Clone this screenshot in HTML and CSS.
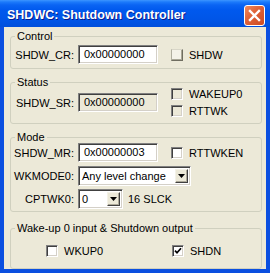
FILE: index.html
```html
<!DOCTYPE html>
<html lang="en">
<head>
  <meta charset="UTF-8">
  <title>SHDWC: Shutdown Controller</title>
  <link rel="stylesheet" href="styles.css">
</head>
<body>
  <div class="window">
    <div class="titlebar">
      <span class="title">SHDWC: Shutdown Controller</span>
      <span class="close">
        <svg width="19" height="19" viewBox="0 0 19 19"><path d="M5 5 L14 14 M14 5 L5 14" stroke="#fff" stroke-width="2.4" stroke-linecap="square"/></svg>
      </span>
    </div>

    <div class="client">
      <fieldset class="group g-control">
        <legend>Control</legend>
        <div class="row">
          <span class="lbl">SHDW_CR:</span>
          <span class="edit">0x00000000</span>
          <span class="check"><span class="box raised"></span>SHDW</span>
        </div>
      </fieldset>

      <fieldset class="group g-status">
        <legend>Status</legend>
        <div class="row tall">
          <span class="lbl">SHDW_SR:</span>
          <span class="edit readonly">0x00000000</span>
          <div class="checks">
            <span class="check"><span class="box grey"></span>WAKEUP0</span>
            <span class="check"><span class="box grey"></span>RTTWK</span>
          </div>
        </div>
      </fieldset>

      <fieldset class="group g-mode">
        <legend>Mode</legend>
        <div class="row">
          <span class="lbl">SHDW_MR:</span>
          <span class="edit">0x00000003</span>
          <span class="check"><span class="box"></span>RTTWKEN</span>
        </div>
        <div class="row combo-row">
          <span class="lbl">WKMODE0:</span>
          <span class="combo wide"><span class="val">Any level change</span><span class="drop"><svg width="7" height="4" viewBox="0 0 7 4"><path d="M0 0 H7 L3.5 4 Z" fill="#000"/></svg></span></span>
        </div>
        <div class="row combo-row second">
          <span class="lbl">CPTWK0:</span>
          <span class="combo narrow"><span class="val">0</span><span class="drop"><svg width="7" height="4" viewBox="0 0 7 4"><path d="M0 0 H7 L3.5 4 Z" fill="#000"/></svg></span></span>
          <span class="unit">16 SLCK</span>
        </div>
      </fieldset>

      <fieldset class="group g-wake">
        <legend>Wake-up 0 input &amp; Shutdown output</legend>
        <div class="row wake-row">
          <span class="check wkup"><span class="box"></span>WKUP0</span>
          <span class="check shdn"><span class="box"><svg width="8" height="8" viewBox="0 0 8 8"><path d="M1 3.6 L3 5.8 L7 1.2" stroke="#000" stroke-width="1.7" fill="none"/></svg></span>SHDN</span>
        </div>
      </fieldset>
    </div>
  </div>
</body>
</html>
```

FILE: styles.css
```css
body{
  margin: 0;
  font-family: "Liberation Sans", Arial, sans-serif;
  font-size: 11px;
  color: #000;
}
.window{
  width: 270px;
  height: 273px;
  background-color: #0b4fe0;
  display: flex;
  flex-direction: column;
}
.titlebar{
  height: 27px;
  display: flex;
  align-items: flex-start;
  padding: 0 5px 0 7px;
  background: linear-gradient(to bottom, #3d95ff 0, #1c7afb 2px, #0a64f3 5px, #0059ee 10px, #0055e7 20px, #004fdc 27px);
}
.title{
  color: white;
  font-weight: bold;
  font-size: 12.5px;
  margin-top: 8px;
  text-shadow: 1px 1px #0c1a8a;
}
.close{
  margin-left: auto;
  margin-top: 5px;
  width: 21px;
  height: 21px;
  box-sizing: border-box;
  border: 1px solid white;
  border-radius: 3px;
  background: linear-gradient(135deg, #f08a5e 0, #e0643a 40%, #cc4a22 100%);
  display: flex;
}
.client{
  flex: 1;
  margin: 0 4px 4px 4px;
  padding: 0 4px 0 6px;
  background-color: #ece9d8;
}
.group{
  margin: 0;
  padding: 0;
  min-width: 0;
  border: 1px solid #d0d0bf;
  border-radius: 3px;
}
legend{
  margin-left: 4px;
  padding: 0 2px;
  line-height: 12px;
  font-size: 11px;
}
.g-control{
  margin-top: 3px;
  padding: 3px 0 4px 0;
}
.g-status{
  margin-top: 7px;
  padding: 0 0 6px 0;
}
.g-mode{
  margin-top: 7px;
  padding: 0 0 2px 0;
}
.g-wake{
  margin-top: 10px;
  padding: 7px 0 8px 0;
}
.row{
  display: flex;
  align-items: center;
  height: 19px;
}
.row.tall{
  height: auto;
}
.wake-row{
  padding-left: 35px;
}
.combo-row{
  height: 20px;
  margin-top: 4px;
}
.combo-row.second{
  margin-top: 3px;
}
.lbl{
  width: 63px;
  margin-right: 4px;
  text-align: right;
  white-space: nowrap;
}
.edit{
  width: 80px;
  height: 19px;
  box-sizing: border-box;
  padding-left: 5px;
  line-height: 17px;
  background-color: white;
  border: 1px solid;
  border-color: #808080 #fff #fff #808080;
  box-shadow: inset 1px 1px #404040, inset -1px -1px #d4d0c8;
}
.edit.readonly{
  background-color: #ece9d8;
}
.checks{
  display: flex;
  flex-direction: column;
  gap: 5px;
}
.check{
  display: flex;
  align-items: center;
  margin-left: 13px;
  white-space: nowrap;
}
.box{
  width: 12px;
  height: 12px;
  box-sizing: border-box;
  margin-right: 6px;
  background-color: white;
  border: 1px solid;
  border-color: #808080 #fff #fff #808080;
  box-shadow: inset 1px 1px #404040, inset -1px -1px #d4d0c8;
  display: flex;
  align-items: center;
  justify-content: center;
}
.box.grey{
  background-color: #ece9d8;
}
.box.raised{
  background-color: #f4f2e8;
  border-color: #d8d6c8 #6f6d60 #6f6d60 #b0ae9f;
  box-shadow: inset -1px -1px #a9a797;
}
.g-wake .check{
  margin-left: 0;
}
.wkup{
  width: 126px;
}
.combo{
  display: flex;
  align-items: center;
  height: 20px;
  box-sizing: border-box;
  padding: 2px;
  background-color: white;
  border: 1px solid;
  border-color: #808080 #fff #fff #808080;
  box-shadow: inset 1px 1px #404040, inset -1px -1px #d4d0c8;
}
.combo.wide{
  width: 113px;
}
.combo.narrow{
  width: 45px;
}
.val{
  flex: 1;
  padding-left: 1px;
  line-height: 14px;
}
.drop{
  width: 13px;
  height: 14px;
  box-sizing: border-box;
  background-color: #ece9d8;
  border: 1px solid;
  border-color: #f4f2e8 #404040 #404040 #f4f2e8;
  box-shadow: inset -1px -1px #aca899;
  display: flex;
  align-items: center;
  justify-content: center;
}
.unit{
  margin-left: 5px;
}
```
